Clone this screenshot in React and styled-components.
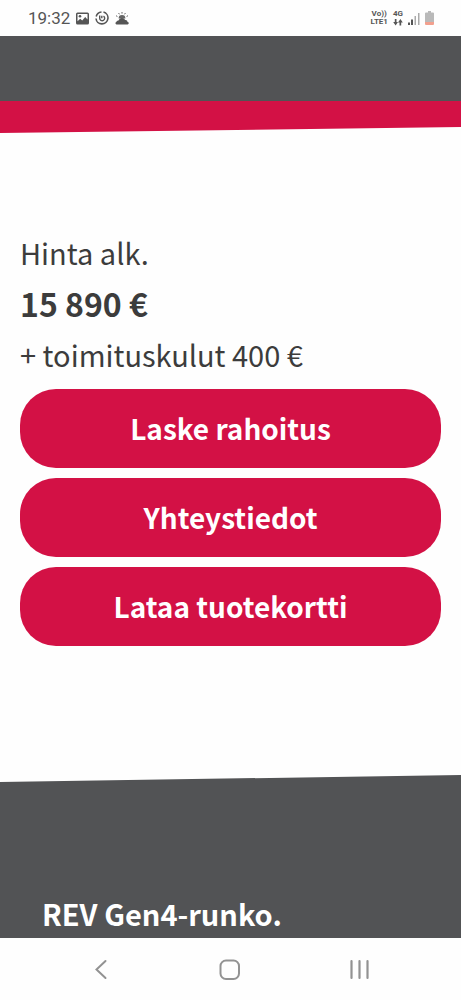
import React from "react";
import styled, { createGlobalStyle } from "styled-components";

const red = "#d31145";
const grey = "#525355";
const ink = "#3c3c3c";

const GlobalStyle = createGlobalStyle`
  * {
    box-sizing: border-box;
  }

  body {
    margin: 0;
    background: #fefefe;
    font-family: "Noto Sans CJK SC", "Open Sans", sans-serif;
  }
`;

const Screen = styled.div`
  display: flex;
  flex-direction: column;
  min-height: 100vh;
`;

const StatusBar = styled.header`
  display: flex;
  align-items: center;
  justify-content: space-between;
  height: 36px;
  padding: 0 27px 0 28px;
  color: #555;
  font-family: Roboto, sans-serif;
`;

const StatusGroup = styled.div`
  display: flex;
  align-items: center;
  gap: ${props => props.$gap};
`;

const Clock = styled.time`
  font-size: 17px;
  line-height: 20px;
`;

const Network = styled.span`
  display: flex;
  flex-direction: column;
  align-items: center;
  font-size: 8px;
  font-weight: 700;
  line-height: 8px;
`;

const Icon = styled.svg`
  display: block;
  flex: none;
`;

const Banner = styled.div`
  height: 65px;
  background: ${grey};
`;

const RedSlope = styled.div`
  height: 32px;
  background: ${red};
  clip-path: polygon(0 0, 100% 0, 100% calc(100% - 6px), 0 100%);
`;

const Offer = styled.section`
  padding: 94px 20px 129px;
`;

const PriceLine = styled.p`
  margin: 0;
  color: ${ink};
  font-size: ${props => (props.$strong ? "32px" : "29px")};
  font-weight: ${props => (props.$strong ? 700 : 400)};
  line-height: ${props => (props.$strong ? "52px" : "50px")};
`;

const Actions = styled.div`
  display: flex;
  flex-direction: column;
  gap: 10px;
  margin-top: 10px;
`;

const Button = styled.button`
  width: 100%;
  height: 79px;
  padding: 0 20px 2px;
  border: 0;
  border-radius: 36px;
  background: ${red};
  color: #fff;
  font-family: inherit;
  font-size: 28px;
  font-weight: 700;
  cursor: pointer;
`;

const Feature = styled.section`
  display: flex;
  flex: 1;
  align-items: flex-end;
  padding: 100px 42px 0;
  background: ${grey};
  clip-path: polygon(0 7px, 100% 0, 100% 100%, 0 100%);
`;

const FeatureTitle = styled.h2`
  margin: 0;
  color: #fff;
  font-size: 29px;
  line-height: 50px;
`;

const NavBar = styled.nav`
  display: flex;
  align-items: center;
  justify-content: space-between;
  height: 62px;
  padding: 0 87px 0 86px;
`;

const NavButton = styled.button`
  display: flex;
  padding: 0;
  border: 0;
  background: none;
  color: #929292;
  cursor: pointer;
`;

const PictureIcon = () => (
  <Icon width="13" height="13" viewBox="0 0 13 13">
    <path
      fill="#555"
      fillRule="evenodd"
      d="M1.5.5h10a1.5 1.5 0 0 1 1.5 1.5v9a1.5 1.5 0 0 1-1.5 1.5h-10A1.5 1.5 0 0 1 0 11V2A1.5 1.5 0 0 1 1.5.5ZM1.5 2v7.2l2.7-2.4 2 1.6 3-3.400 2.300 2.600V2Z"
    />
    <circle cx="4" cy="4.3" r="1.3" fill="#555" />
  </Icon>
);

const SwirlIcon = () => (
  <Icon width="14" height="14" viewBox="0 0 14 14" fill="none" stroke="#555">
    <path
      d="M8.5 1.1A6 6 0 1 1 1 7.500M1.200 5.500A6 6 0 0 1 6.500 1"
      strokeWidth="1.6"
    />
    <path d="M4.700 4.500v2.700a2.500 2.500 0 1 0 3.800-2.100M6.800 4.800v2.400" strokeWidth="1.4" />
  </Icon>
);

const WeatherIcon = () => (
  <Icon width="14" height="13" viewBox="0 0 14 13">
    <path
      d="M7 0v1.600M3.600 1l.8 1.300M10.400 1l-.8 1.300M1 3.700l1.400.8M13 3.700l-1.400.8"
      stroke="#666"
    />
    <path d="M3.600 6.500a3.400 3.400 0 0 1 6.800 0Z" fill="#666" />
    <path
      d="M1.500 12.500a1.300 1.300 0 0 1-.2-2.500 2 2 0 0 1 2.200-1.500 3.600 3.600 0 0 1 6.700-.4 2.200 2.200 0 0 1 2.400 2 1.200 1.200 0 0 1-.1 2.400Z"
      fill="#555"
    />
  </Icon>
);

const DataArrows = () => (
  <Icon width="10" height="8" viewBox="0 0 10 8" fill="#555">
    <path d="M1.800 1h1.700v3h1.500L2.600 7.500.2 4h1.600ZM6.500 7.500h1.700V4.500h1.600L7.400 1 5 4.500h1.500Z" />
  </Icon>
);

const SignalIcon = () => (
  <Icon width="12" height="13" viewBox="0 0 12 13">
    <path d="M0 10.500h2V13H0ZM3 7.500h2V13H3Z" fill="#555" />
    <path d="M6.500 4H8v9H6.500ZM10 1h1.500v12H10Z" fill="#aaa" />
  </Icon>
);

const BatteryIcon = () => (
  <Icon width="9" height="14" viewBox="0 0 9 14">
    <path d="M3 0h3v1.5h2a1 1 0 0 1 1 1V11H0V2.5a1 1 0 0 1 1-1h2Z" fill="#b9b9b9" />
    <path d="M0 11h9v2a1 1 0 0 1-1 1H1a1 1 0 0 1-1-1Z" fill="#f2a08e" />
  </Icon>
);

const BackIcon = () => (
  <Icon width="30" height="24" viewBox="0 0 30 24">
    <path
      d="M19.5 4 10.5 12.500 19.5 21"
      fill="none"
      stroke="currentColor"
      strokeWidth="2"
      strokeLinecap="round"
    />
  </Icon>
);

const HomeIcon = () => (
  <Icon width="24" height="24" viewBox="0 0 24 24">
    <rect
      x="2.5"
      y="3.5"
      width="18.5"
      height="18.5"
      rx="5.5"
      fill="none"
      stroke="currentColor"
      strokeWidth="2"
    />
  </Icon>
);

const RecentsIcon = () => (
  <Icon width="30" height="24" viewBox="0 0 30 24">
    <path
      d="M7.500 4v17M15.500 4v17M23.500 4v17"
      stroke="currentColor"
      strokeWidth="2.200"
      strokeLinecap="round"
    />
  </Icon>
);

const actions = ["Laske rahoitus", "Yhteystiedot", "Lataa tuotekortti"];

const App = () => (
  <Screen>
    <GlobalStyle />
    <StatusBar>
      <StatusGroup $gap="6px">
        <Clock>19:32</Clock>
        <PictureIcon />
        <SwirlIcon />
        <WeatherIcon />
      </StatusGroup>
      <StatusGroup $gap="5px">
        <Network>
          <span>Vo))</span>
          <span>LTE1</span>
        </Network>
        <Network>
          <span>4G</span>
          <DataArrows />
        </Network>
        <SignalIcon />
        <BatteryIcon />
      </StatusGroup>
    </StatusBar>
    <Banner />
    <RedSlope />
    <Offer>
      <PriceLine>Hinta alk.</PriceLine>
      <PriceLine $strong>15 890 €</PriceLine>
      <PriceLine>+ toimituskulut 400 €</PriceLine>
      <Actions>
        {actions.map(label => (
          <Button key={label} type="button">
            {label}
          </Button>
        ))}
      </Actions>
    </Offer>
    <Feature>
      <FeatureTitle>REV Gen4-runko.</FeatureTitle>
    </Feature>
    <NavBar>
      <NavButton type="button" aria-label="Takaisin">
        <BackIcon />
      </NavButton>
      <NavButton type="button" aria-label="Koti">
        <HomeIcon />
      </NavButton>
      <NavButton type="button" aria-label="Viimeisimmät">
        <RecentsIcon />
      </NavButton>
    </NavBar>
  </Screen>
);

export default App;
